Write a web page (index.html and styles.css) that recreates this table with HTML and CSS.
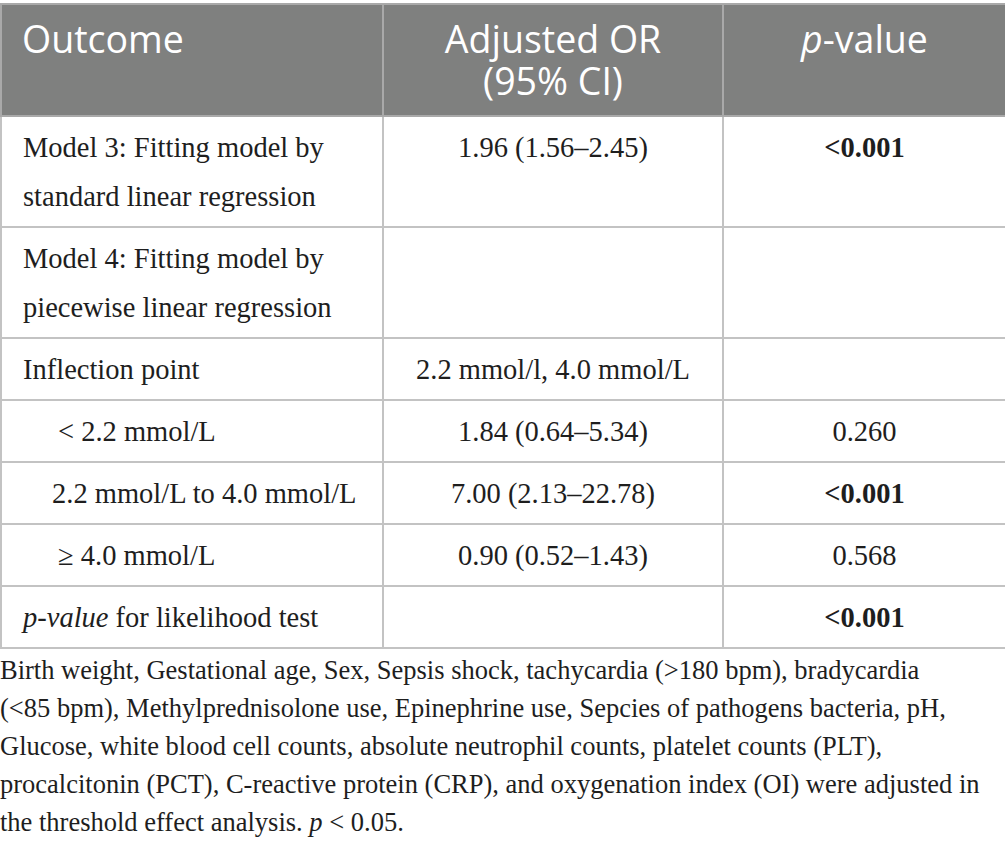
FILE: index.html
```html
<!DOCTYPE html>
<html>
<head>
<meta charset="utf-8">
<link rel="stylesheet" href="styles.css">
</head>
<body>
<table class="tbl">
  <colgroup>
    <col class="c1"><col class="c2"><col class="c3">
  </colgroup>
  <thead>
    <tr>
      <th class="left">Outcome</th>
      <th>Adjusted OR<br>(95% CI)</th>
      <th><i>p</i>-value</th>
    </tr>
  </thead>
  <tbody>
    <tr class="dbl">
      <td class="left">Model 3: Fitting model by standard linear regression</td>
      <td>1.96 (1.56–2.45)</td>
      <td><b>&lt;0.001</b></td>
    </tr>
    <tr class="dbl">
      <td class="left">Model 4: Fitting model by piecewise linear regression</td>
      <td></td>
      <td></td>
    </tr>
    <tr>
      <td class="left">Inflection point</td>
      <td>2.2 mmol/l, 4.0 mmol/L</td>
      <td></td>
    </tr>
    <tr>
      <td class="left ind">&lt; 2.2 mmol/L</td>
      <td>1.84 (0.64–5.34)</td>
      <td>0.260</td>
    </tr>
    <tr>
      <td class="left ind2">2.2 mmol/L to 4.0 mmol/L</td>
      <td>7.00 (2.13–22.78)</td>
      <td><b>&lt;0.001</b></td>
    </tr>
    <tr>
      <td class="left ind">≥ 4.0 mmol/L</td>
      <td>0.90 (0.52–1.43)</td>
      <td>0.568</td>
    </tr>
    <tr>
      <td class="left"><i>p-value</i> for likelihood test</td>
      <td></td>
      <td><b>&lt;0.001</b></td>
    </tr>
  </tbody>
</table>
<p class="note">Birth weight, Gestational age, Sex, Sepsis shock, tachycardia (&gt;180 bpm), bradycardia<br>(&lt;85 bpm), Methylprednisolone use, Epinephrine use, Sepcies of pathogens bacteria, pH,<br>Glucose, white blood cell counts, absolute neutrophil counts, platelet counts (PLT),<br>procalcitonin (PCT), C-reactive protein (CRP), and oxygenation index (OI) were adjusted in<br>the threshold effect analysis. <i>p</i> &lt; 0.05.</p>
</body>
</html>
```
FILE: styles.css
```css
html, body {
  margin: 0;
  padding: 0;
  background: #ffffff;
}
body {
  width: 1005px;
  color: #1e1e1e;
  font-family: "Liberation Serif", "Times New Roman", serif;
}
.tbl {
  margin-top: 3px;
  border-collapse: collapse;
  table-layout: fixed;
  width: 1005px;
}
.c1 { width: 382px; }
.c2 { width: 340px; }
.c3 { width: 283px; }
.tbl th {
  background: #7f807f;
  color: #ffffff;
  font-family: "Open Sans", "Liberation Sans", sans-serif;
  font-weight: 400;
  font-size: 37.5px;
  line-height: 42px;
  padding: 13px 6px 13px 6px;
  text-align: center;
  vertical-align: top;
  border: 2px solid #a9a9a9;
}
.tbl th.left {
  text-align: left;
  padding-left: 20px;
}
.tbl td {
  font-size: 28.5px;
  line-height: 49px;
  padding: 6px 6px 5px 6px;
  text-align: center;
  vertical-align: top;
  border: 2px solid #c3c3c3;
}
.tbl td.left {
  text-align: left;
  padding-left: 21px;
  padding-right: 30px;
}
.tbl td.ind { padding-left: 56px; }
.tbl td.ind2 { padding-left: 50px; padding-right: 4px; }
.note {
  margin: 0;
  padding-top: 2px;
  font-size: 26.5px;
  line-height: 38px;
  white-space: nowrap;
  color: #1e1e1e;
}
```
